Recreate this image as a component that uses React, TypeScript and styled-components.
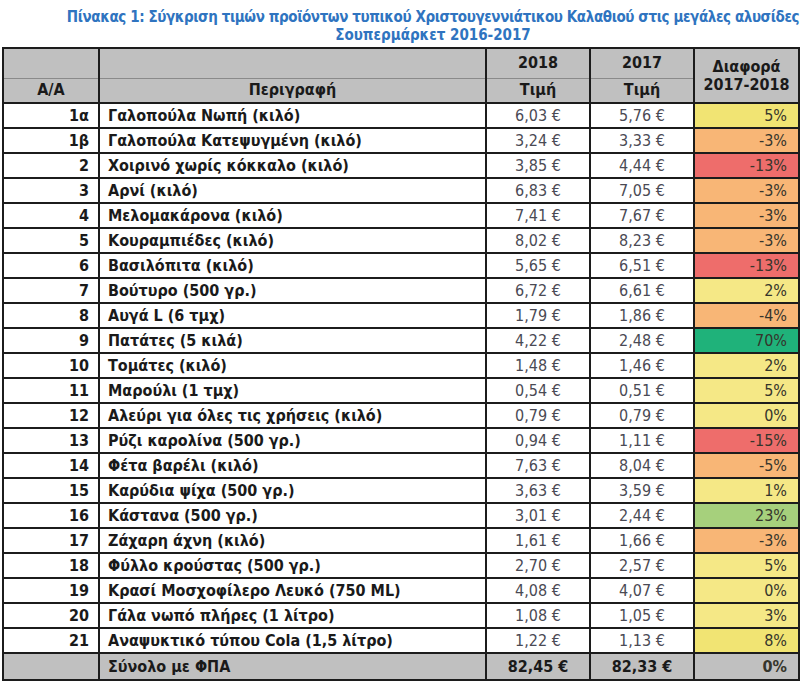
import styled, { createGlobalStyle } from "styled-components";

const GlobalStyle = createGlobalStyle`
  html, body {
    margin: 0;
    padding: 0;
    background: #fff;
    overflow: hidden;
  }
  body {
    font-family: "Liberation Sans Narrow", "Arial Narrow", "DejaVu Sans Condensed", "Liberation Sans", sans-serif;
  }
`;

const Page = styled.div`
  width: 800px;
  height: 683px;
  overflow: hidden;
  padding-top: 8px;
  box-sizing: border-box;
`;

const Title = styled.h1`
  margin: 0 0 3px;
  width: 866px;
  text-align: center;
  color: #2f74c0;
  font-size: 15px;
  line-height: 18px;
  font-weight: 700;
  white-space: nowrap;
`;

const TitleLine = styled.span<{ $tight?: boolean }>`
  display: block;
  letter-spacing: ${(p) => (p.$tight ? "-0.4px" : "0")};
`;

const Table = styled.table`
  margin-left: 2px;
  width: 796px;
  table-layout: fixed;
  border-collapse: collapse;
  border: 2px solid #1c1c1c;
  font-size: 16px;
  color: #1a1a1a;
`;

const HeadRow = styled.tr<{ $h: number }>`
  height: ${(p) => p.$h}px;
  background: #c0c0c0;
`;

const HeadCell = styled.th<{ $split?: boolean }>`
  border: 2px solid #1c1c1c;
  ${(p) => (p.$split ? "border-bottom: 1px solid #8a8a8a;" : "")}
  padding: 0 4px;
  font-weight: 700;
  text-align: center;
  line-height: 18px;
`;

const HeadCellLow = styled(HeadCell)`
  border-top: none;
`;

const Row = styled.tr<{ $total?: boolean }>`
  height: ${(p) => (p.$total ? 27 : 25)}px;
  background: ${(p) => (p.$total ? "#c0c0c0" : "#fff")};
`;

const Cell = styled.td`
  border: 2px solid #1c1c1c;
  padding: 0;
  line-height: 20px;
  white-space: nowrap;
  overflow: hidden;
`;

const NumCell = styled(Cell)`
  text-align: right;
  padding-right: 9px;
  font-weight: 700;
`;

const DescCell = styled(Cell)`
  padding-left: 8px;
  font-weight: 700;
`;

const PriceCell = styled(Cell)<{ $bold?: boolean }>`
  text-align: center;
  color: ${(p) => (p.$bold ? "#1a1a1a" : "#4a4a54")};
  font-weight: ${(p) => (p.$bold ? 700 : 400)};
`;

const DiffCell = styled(Cell)<{ $bg: string; $bold?: boolean }>`
  text-align: right;
  padding-right: 11px;
  background: ${(p) => p.$bg};
  color: #35352c;
  font-weight: ${(p) => (p.$bold ? 700 : 400)};
`;

const shades: Record<string, string> = {
  y: "#f5e886",
  y2: "#f1e473",
  o: "#f8b676",
  r: "#ee6d6b",
  g: "#1fb27a",
  lg: "#a6d07c",
};

const rows: [string, string, string, string, string, string][] = [
  ["1α", "Γαλοπούλα Νωπή (κιλό)", "6,03 €", "5,76 €", "5%", "y2"],
  ["1β", "Γαλοπούλα Κατεψυγμένη (κιλό)", "3,24 €", "3,33 €", "-3%", "o"],
  ["2", "Χοιρινό χωρίς κόκκαλο (κιλό)", "3,85 €", "4,44 €", "-13%", "r"],
  ["3", "Αρνί (κιλό)", "6,83 €", "7,05 €", "-3%", "o"],
  ["4", "Μελομακάρονα (κιλό)", "7,41 €", "7,67 €", "-3%", "o"],
  ["5", "Κουραμπιέδες (κιλό)", "8,02 €", "8,23 €", "-3%", "o"],
  ["6", "Βασιλόπιτα (κιλό)", "5,65 €", "6,51 €", "-13%", "r"],
  ["7", "Βούτυρο (500 γρ.)", "6,72 €", "6,61 €", "2%", "y"],
  ["8", "Αυγά L (6 τμχ)", "1,79 €", "1,86 €", "-4%", "o"],
  ["9", "Πατάτες (5 κιλά)", "4,22 €", "2,48 €", "70%", "g"],
  ["10", "Τομάτες (κιλό)", "1,48 €", "1,46 €", "2%", "y"],
  ["11", "Μαρούλι (1 τμχ)", "0,54 €", "0,51 €", "5%", "y"],
  ["12", "Αλεύρι για όλες τις χρήσεις (κιλό)", "0,79 €", "0,79 €", "0%", "y"],
  ["13", "Ρύζι καρολίνα (500 γρ.)", "0,94 €", "1,11 €", "-15%", "r"],
  ["14", "Φέτα βαρέλι (κιλό)", "7,63 €", "8,04 €", "-5%", "o"],
  ["15", "Καρύδια ψίχα (500 γρ.)", "3,63 €", "3,59 €", "1%", "y"],
  ["16", "Κάστανα (500 γρ.)", "3,01 €", "2,44 €", "23%", "lg"],
  ["17", "Ζάχαρη άχνη (κιλό)", "1,61 €", "1,66 €", "-3%", "o"],
  ["18", "Φύλλο κρούστας (500 γρ.)", "2,70 €", "2,57 €", "5%", "y"],
  ["19", "Κρασί Μοσχοφίλερο Λευκό (750 ML)", "4,08 €", "4,07 €", "0%", "y"],
  ["20", "Γάλα νωπό πλήρες (1 λίτρο)", "1,08 €", "1,05 €", "3%", "y"],
  ["21", "Αναψυκτικό τύπου Cola (1,5 λίτρο)", "1,22 €", "1,13 €", "8%", "y2"],
];

export default function App() {
  return (
    <Page>
      <GlobalStyle />
      <Title>
        <TitleLine $tight>
          Πίνακας 1: Σύγκριση τιμών προϊόντων τυπικού Χριστουγεννιάτικου Καλαθιού στις μεγάλες αλυσίδες
        </TitleLine>
        <TitleLine>Σουπερμάρκετ 2016-2017</TitleLine>
      </Title>
      <Table>
        <colgroup>
          <col style={{ width: 96 }} />
          <col style={{ width: 387 }} />
          <col style={{ width: 104 }} />
          <col style={{ width: 104 }} />
          <col style={{ width: 105 }} />
        </colgroup>
        <thead>
          <HeadRow $h={30}>
            <HeadCell $split />
            <HeadCell $split />
            <HeadCell $split>2018</HeadCell>
            <HeadCell $split>2017</HeadCell>
            <HeadCell rowSpan={2}>
              Διαφορά
              <br />
              2017-2018
            </HeadCell>
          </HeadRow>
          <HeadRow $h={25}>
            <HeadCellLow>Α/Α</HeadCellLow>
            <HeadCellLow>Περιγραφή</HeadCellLow>
            <HeadCellLow>Τιμή</HeadCellLow>
            <HeadCellLow>Τιμή</HeadCellLow>
          </HeadRow>
        </thead>
        <tbody>
          {rows.map(([no, desc, p18, p17, diff, tone]) => (
            <Row key={no}>
              <NumCell>{no}</NumCell>
              <DescCell>{desc}</DescCell>
              <PriceCell>{p18}</PriceCell>
              <PriceCell>{p17}</PriceCell>
              <DiffCell $bg={shades[tone]}>{diff}</DiffCell>
            </Row>
          ))}
          <Row $total>
            <NumCell />
            <DescCell>Σύνολο με ΦΠΑ</DescCell>
            <PriceCell $bold>82,45 €</PriceCell>
            <PriceCell $bold>82,33 €</PriceCell>
            <DiffCell $bg="#c0c0c0" $bold>
              0%
            </DiffCell>
          </Row>
        </tbody>
      </Table>
    </Page>
  );
}
